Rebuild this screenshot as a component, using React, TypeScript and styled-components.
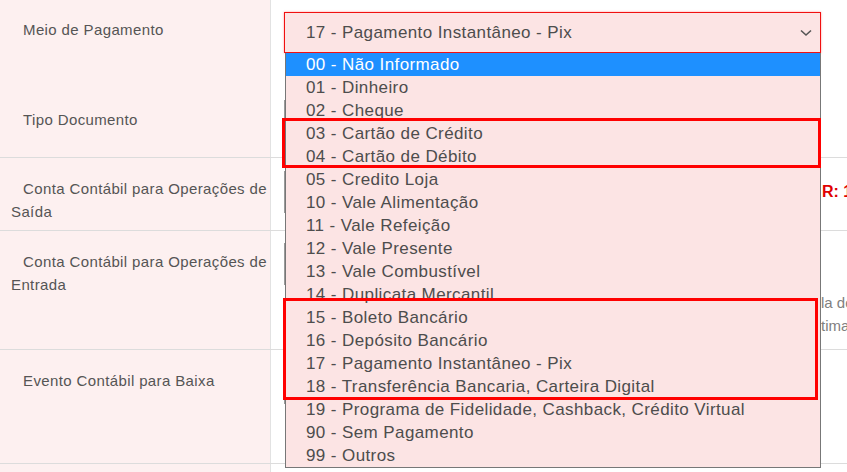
import React from 'react'
import styled, { createGlobalStyle } from 'styled-components'

const GlobalStyle = createGlobalStyle`
  html, body {
    margin: 0;
    padding: 0;
    overflow: hidden;
    background: #ffffff;
    font-family: "Liberation Sans", Arial, sans-serif;
  }
`

const options = [
  '00 - Não Informado',
  '01 - Dinheiro',
  '02 - Cheque',
  '03 - Cartão de Crédito',
  '04 - Cartão de Débito',
  '05 - Credito Loja',
  '10 - Vale Alimentação',
  '11 - Vale Refeição',
  '12 - Vale Presente',
  '13 - Vale Combustível',
  '14 - Duplicata Mercantil',
  '15 - Boleto Bancário',
  '16 - Depósito Bancário',
  '17 - Pagamento Instantâneo - Pix',
  '18 - Transferência Bancaria, Carteira Digital',
  '19 - Programa de Fidelidade, Cashback, Crédito Virtual',
  '90 - Sem Pagamento',
  '99 - Outros',
]

const App = () => {
  return (
    <Page>
      <GlobalStyle />
      <Row $h={88} $noLine>
        <Label $top={18}>Meio de Pagamento</Label>
        <Cell $top={12}>
          <SelectWrap>
            <SelectBox>
              <span>17 - Pagamento Instantâneo - Pix</span>
              <Chevron viewBox="0 0 12 8">
                <polyline points="1,1.5 6,6 11,1.5" />
              </Chevron>
            </SelectBox>
            <OptionList>
              {options.map((opt, i) => (
                <Option key={opt} $active={i === 0}>{opt}</Option>
              ))}
            </OptionList>
            <Mark $left={-2} $top={106} $w={539} $h={50} />
            <Mark $left={-1} $top={286} $w={535} $h={102} />
          </SelectWrap>
        </Cell>
      </Row>

      <Row $h={69} $noLine>
        <Label $top={20}>Tipo Documento</Label>
        <Cell $top={12}>
          <Field />
        </Cell>
      </Row>

      <Row $h={73}>
        <Label $top={19}>Conta Contábil para Operações de Saída</Label>
        <Cell $top={13}>
          <FieldLine>
            <Field />
            <RedNote>R: 1.1.01.001</RedNote>
          </FieldLine>
        </Cell>
      </Row>

      <Row $h={119}>
        <Label $top={19}>Conta Contábil para Operações de Entrada</Label>
        <Cell $top={12}>
          <Field />
          <Help>
            <HelpLine><Lead>Conta utilizada quando não houver conta definida na tabe</Lead>la de contas</HelpLine>
            <HelpLine><Lead>do movimento, conforme cadastro da úl</Lead>tima alteração</HelpLine>
          </Help>
        </Cell>
      </Row>

      <Row $h={114}>
        <Label $top={19}>Evento Contábil para Baixa</Label>
        <Cell $top={12}>
          <Field />
        </Cell>
      </Row>

      <Row $h={40}>
        <Label $top={19}></Label>
        <Cell $top={12} />
      </Row>
    </Page>
  )
}

export default App

const Page = styled.div`
  width: 847px;
  height: 472px;
  overflow: hidden;
  background: #ffffff;
`
const Row = styled.div<{ $h: number; $noLine?: boolean }>`
  display: grid;
  grid-template-columns: 271px 1fr;
  height: ${(p) => p.$h}px;
  box-sizing: border-box;
  border-top: ${(p) => (p.$noLine ? 'none' : '1px solid #dcdcdc')};
`
const Label = styled.div<{ $top: number }>`
  box-sizing: border-box;
  background: #fdf0f0;
  border-right: 1px solid #e2e2e2;
  padding: ${(p) => p.$top}px 0 0 11px;
  text-indent: 12px;
  font-size: 15px;
  letter-spacing: 0.38px;
  line-height: 23px;
  color: #555555;
`
const Cell = styled.div<{ $top: number }>`
  position: relative;
  padding: ${(p) => p.$top}px 0 0 13px;
  min-width: 0;
`
const SelectWrap = styled.div`
  position: relative;
  width: 537px;
  z-index: 5;
`
const SelectBox = styled.div`
  box-sizing: border-box;
  height: 41px;
  display: flex;
  align-items: center;
  justify-content: space-between;
  padding: 0 8px 0 21px;
  background: #fce4e4;
  border: 1px solid #f01010;
  box-shadow: 0 0 2px rgba(255, 60, 60, 0.5);
  font-size: 17px;
  color: #4d4d4d;
  letter-spacing: 0.4px;
`
const Chevron = styled.svg`
  width: 12px;
  height: 8px;
  fill: none;
  stroke: #555555;
  stroke-width: 1.6;
`
const OptionList = styled.div`
  position: absolute;
  top: 41px;
  left: 1px;
  width: 536px;
  box-sizing: border-box;
  background: #fce4e4;
  border: 1px solid #777777;
  border-top: none;
`
const Option = styled.div<{ $active?: boolean }>`
  height: 23px;
  line-height: 23px;
  padding-left: 20px;
  font-size: 17px;
  letter-spacing: 0.4px;
  white-space: nowrap;
  background: ${(p) => (p.$active ? '#1e90ff' : 'transparent')};
  color: ${(p) => (p.$active ? '#ffffff' : '#4d4d4d')};
`
const Mark = styled.div<{ $left: number; $top: number; $w: number; $h: number }>`
  position: absolute;
  left: ${(p) => p.$left}px;
  top: ${(p) => p.$top}px;
  width: ${(p) => p.$w}px;
  height: ${(p) => p.$h}px;
  box-sizing: border-box;
  border: 3px solid #ff0000;
  pointer-events: none;
`
const Field = styled.div`
  flex-shrink: 0;
  width: 536px;
  height: 42px;
  box-sizing: border-box;
  border: 1px solid #9a9a9a;
  background: #ffffff;
`
const FieldLine = styled.div`
  display: flex;
  align-items: center;
  gap: 2px;
`
const RedNote = styled.span`
  color: #e00000;
  font-weight: bold;
  font-size: 16px;
  white-space: nowrap;
`
const Help = styled.div`
  margin-top: 6px;
  font-size: 15px;
  line-height: 23px;
  color: #808080;
`
const HelpLine = styled.div`
  white-space: nowrap;
`
const Lead = styled.span`
  display: inline-block;
  width: 537px;
  overflow: hidden;
  vertical-align: top;
`
